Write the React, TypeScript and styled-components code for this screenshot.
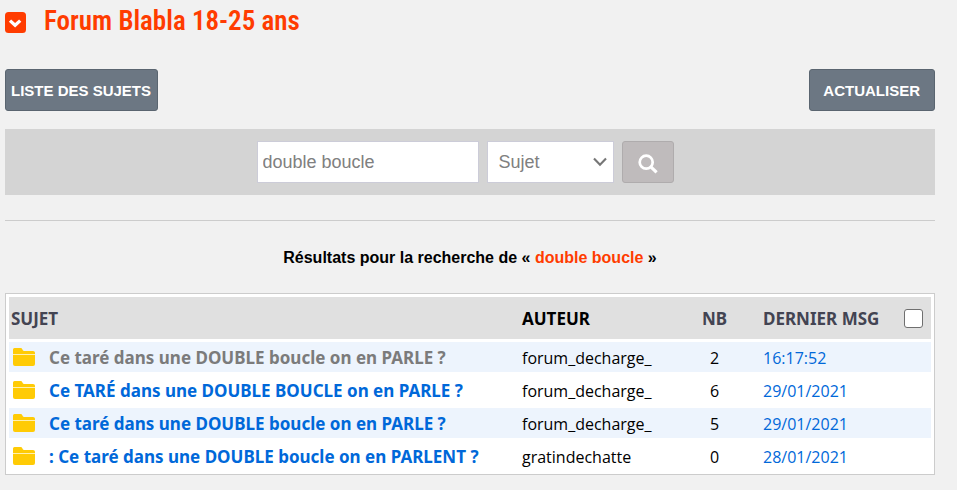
import React, { useState } from 'react';
import styled, { createGlobalStyle } from 'styled-components';

const GlobalStyle = createGlobalStyle`
  *, *::before, *::after { box-sizing: border-box; }
  body {
    margin: 0;
    background: #f1f1f1;
    color: #000;
    font-family: "Liberation Sans", Arial, sans-serif;
    font-size: 16px;
  }
`;

const Page = styled.main`
  padding: 5px 22px 15px 5px;
`;

const TitleBar = styled.header`
  display: flex;
  align-items: center;
  gap: 18px;
  height: 32px;
  color: #ff3c00;
  svg { display: block; margin-top: 2px; }
`;

const Title = styled.h1`
  margin: 0;
  font-family: "Roboto Condensed", Roboto, sans-serif;
  font-size: 27px;
  font-weight: 600;
  line-height: 32px;
`;

const Toolbar = styled.nav`
  display: flex;
  justify-content: space-between;
  margin-top: 32px;
`;

const ToolButton = styled.button<{ $pad: number }>`
  height: 42px;
  padding: 0 ${p => p.$pad + 1}px 0 ${p => p.$pad}px;
  border: 1px solid #5a6570;
  border-radius: 3px;
  background: #6c7783;
  color: #fff;
  font-family: inherit;
  font-size: 15px;
  font-weight: 700;
  text-transform: uppercase;
  white-space: nowrap;
  cursor: pointer;
`;

const SearchForm = styled.form`
  display: flex;
  justify-content: center;
  gap: 8px;
  margin-top: 18px;
  padding: 12px 10px 12px 0;
  background: #d4d4d4;
`;

const SearchInput = styled.input`
  width: 222px;
  height: 42px;
  padding: 0 5px;
  border: 1px solid #ccccd8;
  border-radius: 0;
  outline: none;
  background: #fff;
  color: #808080;
  font-family: inherit;
  font-size: 18px;
`;

const SelectWrap = styled.div`
  display: grid;
  align-items: center;
  width: 127px;
  > * { grid-area: 1 / 1; }
  svg { justify-self: end; margin-right: 7px; pointer-events: none; }
`;

const Select = styled.select`
  width: 100%;
  height: 42px;
  padding: 0 28px 0 11px;
  border: 1px solid #ccccd8;
  border-radius: 0;
  outline: none;
  appearance: none;
  background: #fff;
  color: #808080;
  font-family: inherit;
  font-size: 18px;
`;

const SearchButton = styled.button`
  display: flex;
  align-items: center;
  justify-content: center;
  width: 52px;
  height: 42px;
  padding: 3px 0 0;
  border: 1px solid #afacad;
  border-radius: 3px;
  background: #bfbbbc;
  color: #fff;
  cursor: pointer;
`;

const Divider = styled.hr`
  height: 1px;
  margin: 25px 0 0;
  border: 0;
  background: #cccccc;
`;

const ResultHeading = styled.h2`
  margin: 27px 0 25px;
  font-size: 16px;
  font-weight: 700;
  line-height: 20px;
  text-align: center;
  em { color: #ff3c00; font-style: normal; }
`;

const Table = styled.table`
  width: 100%;
  table-layout: fixed;
  padding: 0 3px;
  border: 1px solid #cccccc;
  border-collapse: separate;
  border-spacing: 0 3px;
  background: #fff;
  font-family: "Open Sans", Tahoma, sans-serif;
`;

const Col = styled.col<{ $width?: number }>`
  width: ${p => (p.$width ? `${p.$width}px` : 'auto')};
`;

const HeadCell = styled.th<{ $dark?: boolean; $center?: boolean }>`
  height: 42px;
  padding: 2px 2px 0;
  background: #e0e0e0;
  color: ${p => (p.$dark ? '#000' : '#434452')};
  font-family: "Noto Sans", Tahoma, sans-serif;
  font-size: 17px;
  font-weight: 700;
  line-height: 24px;
  text-align: ${p => (p.$center ? 'center' : 'left')};
  white-space: nowrap;
`;

const Row = styled.tr`
  &:nth-child(odd) { background: #edf4fd; }
`;

const Cell = styled.td<{ $center?: boolean }>`
  height: 30px;
  padding: 2px 2px 0;
  font-size: 16px;
  line-height: 24px;
  text-align: ${p => (p.$center ? 'center' : 'left')};
  white-space: nowrap;
`;

const Subject = styled.div`
  display: flex;
  align-items: center;
  gap: 14px;
  padding-left: 2px;
  svg { flex: none; margin-bottom: 2px; }
`;

const TopicLink = styled.a<{ $visited?: boolean }>`
  overflow: hidden;
  color: ${p => (p.$visited ? '#7b7b7b' : '#0068d9')};
  font-family: "Noto Sans", Tahoma, sans-serif;
  font-size: 17px;
  font-weight: 700;
  text-decoration: none;
  text-overflow: ellipsis;
`;

const DateLink = styled.a`
  color: #0068d9;
  text-decoration: none;
`;

const CheckAll = styled.input`
  display: block;
  width: 19px;
  height: 19px;
  margin: 0 auto 2px;
  appearance: none;
  border: 1px solid #6f6f6f;
  border-radius: 3px;
  background: #fff;
  &:checked { background: #0068d9; }
`;

const CollapseIcon = () => (
  <svg width="21" height="21" viewBox="0 0 21 21" aria-hidden="true">
    <rect width="21" height="21" rx="3.5" fill="#ff3c00" />
    <path d="M5 8.6 L10.1 13.3 L15.2 8.6" fill="none" stroke="#fff" strokeWidth="3.3" />
  </svg>
);

const ChevronIcon = () => (
  <svg width="14" height="10" viewBox="0 0 14 10" aria-hidden="true">
    <path d="M1 1.5 L7 7.8 L13 1.5" fill="none" stroke="#767676" strokeWidth="2.1" />
  </svg>
);

const MagnifierIcon = () => (
  <svg width="20" height="20" viewBox="0 0 20 20" aria-hidden="true">
    <circle cx="8.2" cy="8.2" r="6.5" fill="none" stroke="#fff" strokeWidth="2.7" />
    <path d="M12.6 12.6 L18.6 18.4" stroke="#fff" strokeWidth="3.2" />
  </svg>
);

const FolderIcon = () => (
  <svg width="22" height="18" viewBox="0 0 22 18" aria-hidden="true">
    <path d="M0 6 V1.5 Q0 0 1.5 0 H7.5 Q9 0 9.3 1.3 Q9.8 3 11 3 H20 Q22 3 22 4.8 V6 Z" fill="#ffcb05" />
    <path d="M0 7 H22 V16 Q22 18 20 18 H2 Q0 18 0 16 Z" fill="#ffcb05" />
    <path d="M0 6.5 H22" stroke="#fff0b0" />
  </svg>
);

const topics = [
  { title: 'Ce taré dans une DOUBLE boucle on en PARLE ?', author: 'forum_decharge_', count: 2, date: '16:17:52', visited: true },
  { title: 'Ce TARÉ dans une DOUBLE BOUCLE on en PARLE ?', author: 'forum_decharge_', count: 6, date: '29/01/2021' },
  { title: 'Ce taré dans une DOUBLE boucle on en PARLE ?', author: 'forum_decharge_', count: 5, date: '29/01/2021' },
  { title: ': Ce taré dans une DOUBLE boucle on en PARLENT ?', author: 'gratindechatte', count: 0, date: '28/01/2021' },
];

export default function App() {
  const [query, setQuery] = useState('double boucle');
  return (
    <>
      <GlobalStyle />
      <Page>
        <TitleBar>
          <CollapseIcon />
          <Title>Forum Blabla 18-25 ans</Title>
        </TitleBar>
        <Toolbar>
          <ToolButton type="button" $pad={5}>Liste des sujets</ToolButton>
          <ToolButton type="button" $pad={13}>Actualiser</ToolButton>
        </Toolbar>
        <SearchForm onSubmit={e => e.preventDefault()}>
          <SearchInput aria-label="Rechercher" value={query} onChange={e => setQuery(e.target.value)} />
          <SelectWrap>
            <Select aria-label="Type de recherche" defaultValue="sujet">
              <option value="sujet">Sujet</option>
            </Select>
            <ChevronIcon />
          </SelectWrap>
          <SearchButton type="submit" aria-label="Lancer la recherche">
            <MagnifierIcon />
          </SearchButton>
        </SearchForm>
        <Divider />
        <ResultHeading>
          Résultats pour la recherche de « <em>double boucle</em> »
        </ResultHeading>
        <Table>
          <colgroup>
            <Col />
            <Col $width={148} />
            <Col $width={93} />
            <Col $width={135} />
            <Col $width={35} />
          </colgroup>
          <thead>
            <tr>
              <HeadCell scope="col">SUJET</HeadCell>
              <HeadCell scope="col" $dark>AUTEUR</HeadCell>
              <HeadCell scope="col" $center>NB</HeadCell>
              <HeadCell scope="col">DERNIER MSG</HeadCell>
              <HeadCell scope="col">
                <CheckAll type="checkbox" aria-label="Tout sélectionner" />
              </HeadCell>
            </tr>
          </thead>
          <tbody>
            {topics.map((t, i) => (
              <Row key={i}>
                <Cell>
                  <Subject>
                    <FolderIcon />
                    <TopicLink href="#" $visited={t.visited}>{t.title}</TopicLink>
                  </Subject>
                </Cell>
                <Cell>{t.author}</Cell>
                <Cell $center>{t.count}</Cell>
                <Cell><DateLink href="#">{t.date}</DateLink></Cell>
                <Cell />
              </Row>
            ))}
          </tbody>
        </Table>
      </Page>
    </>
  );
}
